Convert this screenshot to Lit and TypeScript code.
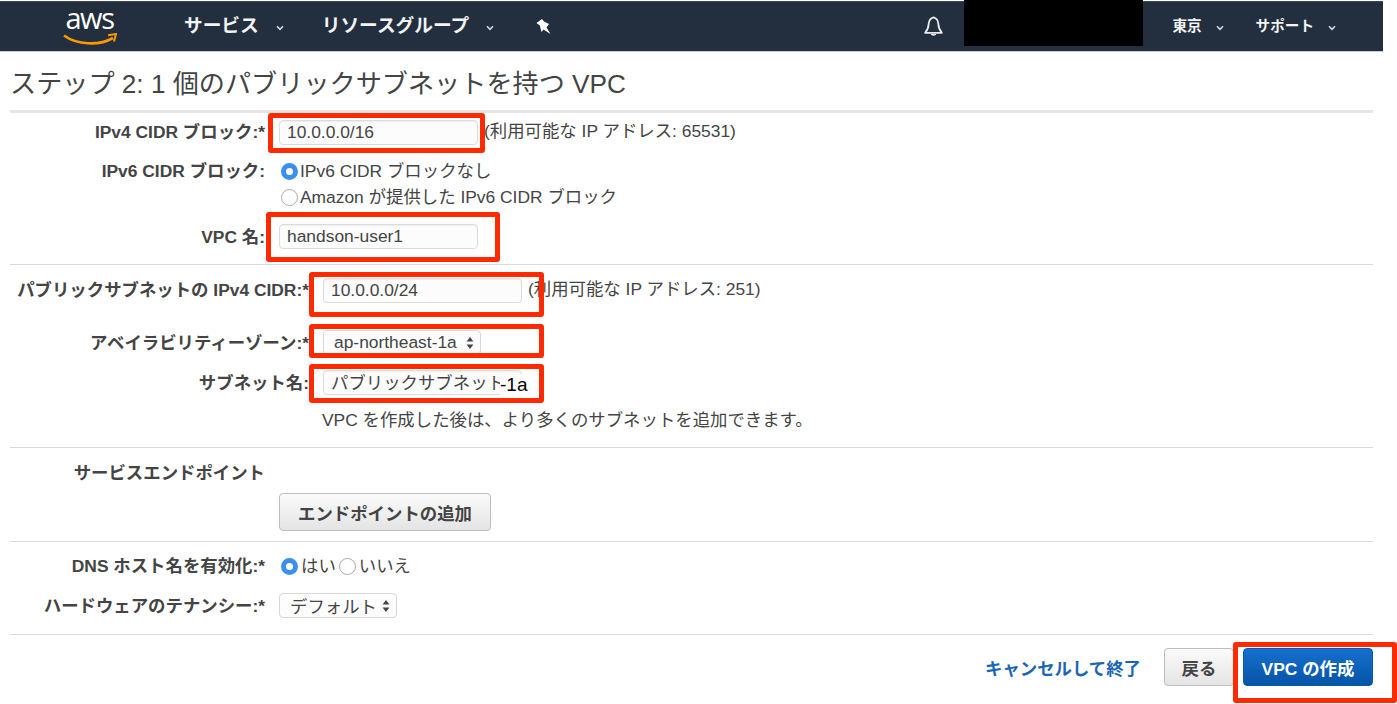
import { LitElement, html, css } from "lit";
import { customElement } from "lit/decorators.js";

const chev = html`<svg class="chev" viewBox="0 0 8 6" width="8" height="6"><path d="M1 1.2 L4 4.4 L7 1.2" fill="none" stroke="#d5dae0" stroke-width="1.6"/></svg>`;
const arrows = html`<svg class="arrows" viewBox="0 0 8 14" width="8" height="14"><path d="M4 1 L7.4 5.6 H.6 Z M4 13 L.6 8.4 H7.4 Z" fill="#444"/></svg>`;

@customElement("app-root")
export class AppRoot extends LitElement {
  static styles = css`
    :host { display: block; position: relative; width: 1383px; height: 704px; background: #fff; color: #444;
      font-family: "Liberation Sans", "Noto Sans CJK JP", sans-serif; font-size: 17.4px; }
    .hdr { border-top: 1px solid #fff; height: 50px; background: #232f3e; border-bottom: 1px solid #c8ccd0;
      display: flex; align-items: center; color: #f2f4f6; font-weight: 700; box-shadow: inset 0 1px 0 #3c4652; }
    .logo { margin-left: 63px; width: 53px; height: 42px; display: flex; flex-direction: column; align-items: center; }
    .logo span { font-family: "Open Sans", sans-serif; font-weight: 400; font-size: 29px; line-height: 30px; letter-spacing: -1.4px; color: #fff; margin-top: -2px; }
    .nav { font-size: 18.7px; display: flex; align-items: center; line-height: 24px; }
    .n1 { margin-left: 68px; }
    .n2 { margin-left: 38px; }
    .chev { margin-left: 17px; margin-top: 4px; flex: none; }
    .pin { margin-left: 42px; }
    .bell { margin-left: auto; margin-right: 227px; }
    .sm { font-size: 14.6px; }
    .sm .chev { margin-left: 14px; }
    .n3 { margin-right: 32px; }
    .n4 { margin-right: 47px; }
    .redact { position: absolute; left: 964px; top: 0; width: 179px; height: 46px; background: #000; }
    h1 { margin: 0; height: 58px; box-sizing: border-box; padding: 16px 0 0 10px; font-size: 26.15px; line-height: 33px; font-weight: 400; color: #444; white-space: nowrap; }
    .sec { margin: 0 10px; border-top: 1px solid #d9d9d9; }
    .s0 { border-top: 3px solid #e6e6e6; padding: 7px 0 15px; }
    .s1 { padding: 13px 0 16px; }
    .s2 { padding: 14px 0 10px; }
    .s3 { padding: 12px 0 16px; }
    .row { display: grid; grid-template-columns: 255px 1fr; column-gap: 14px; align-items: center; }
    .s1 .row { grid-template-columns: 299px 1fr; column-gap: 14px; }
    .lab { text-align: right; font-weight: 700; white-space: nowrap; line-height: 22px; color: #444; }
    .up { position: relative; top: -1px; }
    .ctl { display: flex; align-items: center; min-width: 0; }
    .field { box-sizing: border-box; width: 199px; height: 25px; border: 1px solid #dcdcdc; border-radius: 4px; background: #fcfcfc;
      padding: 0 0 0 7px; font: inherit; color: #444; box-shadow: inset 0 1px 1px #eee; outline: none; margin: 0; }
    .jp { padding-bottom: 3px; }
    .note { margin: 0 0 3px 6px; white-space: nowrap; line-height: 22px; }
    .sel { box-sizing: border-box; height: 25px; border: 1px solid #d8d8d8; border-radius: 4px; background: #fdfdfd; display: flex; align-items: center;
      justify-content: space-between; padding: 0 6px 0 10px; white-space: nowrap; }
    .r { display: inline-flex; align-items: center; white-space: nowrap; line-height: 22px; }
    .r + .r { margin-left: 3px; }
    .dot { box-sizing: border-box; width: 17px; height: 17px; border-radius: 50%; border: 1px solid #aaa; background: #fff; margin-right: 2px; flex: none; }
    .ctl .dot { margin-right: 3px; }
    .dot.on { border: 5.5px solid #3d8fef; background: #fff; }
    .m13 { margin-top: 13px; }
    .m14 { margin-top: 14px; }
    .m27 { margin-top: 27px; }
    .m15 { margin-top: 15px; }
    .stack { display: flex; flex-direction: column; }
    .line { display: flex; align-items: center; height: 26px; margin-left: 2px; }
    .top26 { align-self: start; line-height: 26px; }
    .help { margin: 14px 0 0 312px; line-height: 22px; white-space: nowrap; }
    .h22 { height: 22px; }
    .h24 { height: 24px; }
    .ml2 { margin-left: 2px; }
    .addrow { margin-top: 9px; }
    .btn { box-sizing: border-box; height: 38px; border: 1px solid #bdbdbd; border-radius: 4px; background: linear-gradient(#fbfbfb, #e4e4e4);
      font-weight: 700; color: #444; display: flex; align-items: center; justify-content: center; white-space: nowrap; }
    .add { width: 212px; }
    .foot { margin: 0 10px; padding-top: 13px; display: flex; justify-content: flex-end; align-items: center; }
    .cancel { color: #1a66b5; font-weight: 700; margin-right: 23px; white-space: nowrap; }
    .back { width: 70px; margin-right: 9px; }
    .create { width: 130px; border: 1px solid #0b5aa8; background: linear-gradient(#1670ce, #0654a6); color: #fff; }
    .empty { padding: 0; }
    .box { position: absolute; box-sizing: border-box; border: 5px solid #ff2a00; border-radius: 3px; pointer-events: none; }
    .b1 { left: 268px; top: 113px; width: 217px; height: 40px; }
    .b2 { left: 266px; top: 212px; width: 234px; height: 50px; }
    .b3 { left: 309px; top: 272px; width: 235px; height: 45px; }
    .b4 { left: 309px; top: 324px; width: 235px; height: 34px; }
    .b5 { left: 309px; top: 364px; width: 235px; height: 39px; }
    .b6 { left: 1233px; top: 642px; width: 164px; height: 61px; }
    .patch { position: absolute; left: 500px; top: 374px; background: #fff; color: #000; font-size: 19px; line-height: 21px; width: 28px; }
  `;

  render() {
    return html`
      <div class="hdr">
        <div class="logo"><span>aws</span>
          <svg width="54" height="13" viewBox="0 0 54 13"><path d="M1 2.5 C14 12 36 13 50 5" fill="none" stroke="#f90" stroke-width="2.6"/><path d="M45 2.2 L53 1 L51 8.5" fill="none" stroke="#f90" stroke-width="2"/></svg>
        </div>
        <div class="nav n1">サービス${chev}</div>
        <div class="nav n2">リソースグループ${chev}</div>
        <svg class="pin" width="16" height="17" viewBox="0 0 16 17"><path d="M0.5 5 L6 1 L8 3.6 L13 6 L10.5 9.5 L14.5 16 L7.5 11.5 L5.5 14 L3.8 7.5 Z" fill="#fff"/></svg>
        <svg class="bell" width="23" height="23" viewBox="0 0 22 22"><path d="M11 2.2 C7.5 3 6.6 5.6 6.4 8.5 C6.2 12 5.4 14.4 3 17 H19 C16.6 14.4 15.8 12 15.6 8.5 C15.4 5.6 14.5 3 11 2.2 Z" fill="none" stroke="#e8eaec" stroke-width="1.7" stroke-linejoin="round"/><path d="M8.4 18.2 H13.6 C13.2 20.4 8.8 20.4 8.4 18.2 Z" fill="#e8eaec"/></svg>
        <div class="nav sm n3">東京${chev}</div>
        <div class="nav sm n4">サポート${chev}</div>
      </div>
      <div class="redact"></div>

      <h1>ステップ 2: 1 個のパブリックサブネットを持つ VPC</h1>

      <div class="sec s0">
        <div class="row">
          <div class="lab up">IPv4 CIDR ブロック:*</div>
          <div class="ctl"><input class="field" value="10.0.0.0/16" /><span class="note">(利用可能な IP アドレス: 65531)</span></div>
        </div>
        <div class="row m13">
          <div class="lab top26">IPv6 CIDR ブロック:</div>
          <div class="stack">
            <div class="line"><span class="r"><span class="dot on"></span>IPv6 CIDR ブロックなし</span></div>
            <div class="line"><span class="r"><span class="dot"></span>Amazon が提供した IPv6 CIDR ブロック</span></div>
          </div>
        </div>
        <div class="row m14">
          <div class="lab">VPC 名:</div>
          <div class="ctl"><input class="field" value="handson-user1" /></div>
        </div>
      </div>

      <div class="sec s1">
        <div class="row">
          <div class="lab up">パブリックサブネットの IPv4 CIDR:*</div>
          <div class="ctl"><input class="field" value="10.0.0.0/24" /><span class="note">(利用可能な IP アドレス: 251)</span></div>
        </div>
        <div class="row m27">
          <div class="lab">アベイラビリティーゾーン:*</div>
          <div class="ctl"><div class="sel" style="width:158px">ap-northeast-1a${arrows}</div></div>
        </div>
        <div class="row m15">
          <div class="lab">サブネット名:</div>
          <div class="ctl"><input class="field jp" value="パブリックサブネット" /></div>
        </div>
        <div class="help">VPC を作成した後は、より多くのサブネットを追加できます。</div>
      </div>

      <div class="sec s2">
        <div class="row h22"><div class="lab">サービスエンドポイント</div><div></div></div>
        <div class="row addrow"><div></div><div class="ctl"><div class="btn add">エンドポイントの追加</div></div></div>
      </div>

      <div class="sec s3">
        <div class="row h24">
          <div class="lab">DNS ホスト名を有効化:*</div>
          <div class="ctl ml2"><span class="r"><span class="dot on"></span>はい</span><span class="r"><span class="dot"></span>いいえ</span></div>
        </div>
        <div class="row m15">
          <div class="lab">ハードウェアのテナンシー:*</div>
          <div class="ctl"><div class="sel" style="width:118px">デフォルト${arrows}</div></div>
        </div>
      </div>

      <div class="sec empty"></div>
      <div class="foot">
        <span class="cancel">キャンセルして終了</span>
        <div class="btn back">戻る</div>
        <div class="btn create">VPC の作成</div>
      </div>

      <div class="box b1"></div><div class="box b2"></div><div class="box b3"></div>
      <div class="box b4"></div><div class="box b5"></div><div class="box b6"></div>
      <div class="patch">-1a</div>
    `;
  }
}
